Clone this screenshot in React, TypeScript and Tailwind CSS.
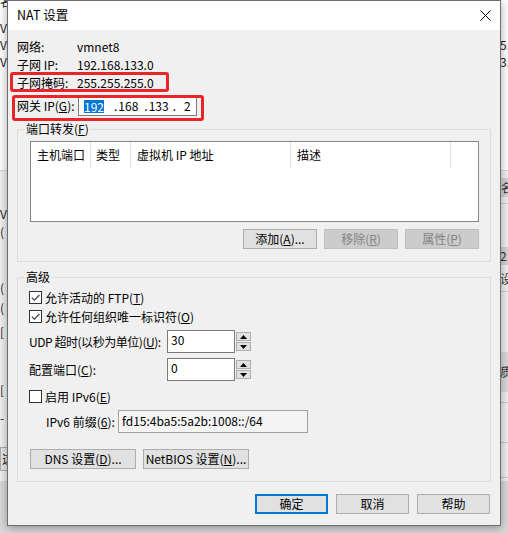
import React from "react";

const FONT = "font-['Noto_Sans_CJK_SC',sans-serif]";

function Checkbox({ checked }: { checked?: boolean }) {
  return (
    <span className="w-[13px] h-[13px] border border-[#333333] bg-white flex items-center justify-center shrink-0">
      {checked && (
        <svg width="11" height="11" viewBox="0 0 11 11">
          <path d="M1.8 5.6 L4.3 8.1 L9.4 3" fill="none" stroke="#3a3a3a" strokeWidth="1.1" />
        </svg>
      )}
    </span>
  );
}

function SpinBtn({ up }: { up?: boolean }) {
  return (
    <div className="w-[15px] h-[9px] border border-[#adadad] bg-[#e1e1e1] flex items-center justify-center">
      <svg width="7" height="4" viewBox="0 0 7 4">
        {up ? <path d="M0 4 L3.5 0 L7 4 Z" fill="#000" /> : <path d="M0 0 L3.5 4 L7 0 Z" fill="#000" />}
      </svg>
    </div>
  );
}

function Spin({ value }: { value: string }) {
  return (
    <div className="flex items-center shrink-0">
      <div className="w-[68px] h-[23px] border border-[#7a7a7a] bg-white pl-[3px] pt-[2px] text-[12px] leading-[14px]">
        {value}
      </div>
      <div className="ml-[1px] flex flex-col gap-[1px]">
        <SpinBtn up />
        <SpinBtn />
      </div>
    </div>
  );
}

function Btn({
  children,
  w,
  disabled,
  primary,
}: {
  children: React.ReactNode;
  w: string;
  disabled?: boolean;
  primary?: boolean;
}) {
  const base = "h-[20px] flex items-center justify-center text-[12px] leading-none whitespace-nowrap " + w;
  if (primary) return <div className={base + " border-2 border-[#0078d7] bg-[#e1e1e1] text-black"}>{children}</div>;
  if (disabled)
    return <div className={base + " border border-[#bfbfbf] bg-[#cccccc] text-[#838383]"}>{children}</div>;
  return <div className={base + " border border-[#adadad] bg-[#e1e1e1] text-black"}>{children}</div>;
}

function Background() {
  return (
    <div className="absolute inset-0 flex flex-col bg-[#f0f0f0] text-[12px] text-[#222222]">
      <div className="h-[171px] bg-white border-b border-[#d6d6d6] flex flex-col">
        <div className="flex justify-between h-[12px] leading-[12px]">
          <span className="-mt-[4px]">名称</span>
          <span />
        </div>
        <div className="flex justify-between mt-[7px] h-[17px] leading-[17px]">
          <span>VMnet0</span>
          <span />
        </div>
        <div className="flex justify-between h-[17px] leading-[17px]">
          <span>VMnet1</span>
          <span className="-mr-[2px]">5.</span>
        </div>
        <div className="flex justify-between h-[17px] leading-[17px]">
          <span>VMnet8</span>
          <span className="-mr-[2px]">3.</span>
        </div>
      </div>
      <div className="h-[310px] flex justify-between">
        <div className="w-[7px] flex flex-col leading-[14px]">
          <span className="mt-[36px]">V</span>
          <span className="mt-[4px]">(</span>
          <span className="mt-[42px]">(</span>
          <span className="mt-[6px]">(</span>
          <span className="mt-[10px]">[</span>
          <span className="mt-[44px]">[</span>
          <span className="mt-[14px]">-</span>
          <div className="mt-[22px] h-[24px] w-[30px] border border-[#adadad] bg-[#e9e9e9] flex items-center pl-[1px]">
            这
          </div>
        </div>
        <div className="w-[8px] flex flex-col text-[#333333]">
          <div className="mt-[7px] h-[19px] bg-[#d4d4d4] leading-[19px] pl-[1px] whitespace-nowrap">名</div>
          <div className="mt-[6px] h-[1px] bg-[#d0d0d0]" />
          <div className="mt-[43px] h-[18px] bg-[#d4d4d4] leading-[18px] whitespace-nowrap">2员</div>
          <div className="mt-[4px] h-[20px] leading-[20px] whitespace-nowrap">设</div>
          <div className="mt-[2px] h-[1px] bg-[#d0d0d0]" />
          <div className="mt-[60px] h-[40px] bg-[#dadada] leading-[40px] whitespace-nowrap">质</div>
          <div className="mt-[10px] h-[1px] bg-[#c8c8c8]" />
          <div className="mt-[39px] h-[1px] bg-[#c8c8c8]" />
          <div className="mt-[34px] h-[1px] bg-[#c8c8c8]" />
        </div>
      </div>
      <div className="flex-1 bg-[#d9d9d9]" />
    </div>
  );
}

export default function App() {
  return (
    <div className={"relative w-[508px] h-[533px] overflow-hidden text-black " + FONT}>
      <Background />
      <div className="absolute left-[7px] top-0 w-[494px] h-[526px] border border-[#6e6e6e] bg-[#f0f0f0] shadow-[0_2px_9px_rgba(0,0,0,0.35)] flex flex-col">
        {/* title bar */}
        <div className="h-[29px] bg-white flex items-center justify-between pl-[9px] pr-[9px] shrink-0">
          <span className="text-[12.5px] leading-none">NAT 设置</span>
          <svg width="11" height="11" viewBox="0 0 11 11">
            <path d="M0.5 0.5 L10.5 10.5 M10.5 0.5 L0.5 10.5" stroke="#000" strokeWidth="1" />
          </svg>
        </div>

        {/* body */}
        <div className="flex flex-col pl-[9px] pr-[9px] pt-[8px] text-[12px] whitespace-nowrap">
          <div className="flex items-center h-[18px] leading-none">
            <span className="w-[60px] shrink-0">网络:</span>
            <span>vmnet8</span>
          </div>
          <div className="flex items-center h-[18px] leading-none">
            <span className="w-[60px] shrink-0">子网 IP:</span>
            <span>192.168.133.0</span>
          </div>
          <div className="flex items-center h-[18px] leading-none">
            <span className="w-[60px] shrink-0">子网掩码:</span>
            <span>255.255.255.0</span>
          </div>
          <div className="flex items-center h-[20px] mt-[4px] leading-none">
            <span className="w-[61px] shrink-0">
              网关 IP(<u>G</u>):
            </span>
            <div className="w-[119px] h-[20px] border border-[#7a7a7a] bg-white flex items-center pl-[5px]">
              <span className="bg-[#0078d7] text-white leading-[13px]">192</span>
              <span className="ml-[10px]">.</span>
              <span className="ml-[1px]">168</span>
              <span className="ml-[6px]">.</span>
              <span className="ml-[1px]">133</span>
              <span className="ml-[4px]">.</span>
              <span className="ml-[8px]">2</span>
            </div>
          </div>

          {/* port forwarding group */}
          <fieldset className="mt-[5px] border border-[#dcdcdc] pb-[12px]">
            <legend className="ml-[6px] px-[2px] leading-[16px]">
              端口转发(<u>F</u>)
            </legend>
            <div className="mt-[4px] ml-[12px] mr-[11px] h-[81px] border border-[#828790] bg-white">
              <div className="flex h-[26px] leading-none">
                <div className="w-[60px] pl-[6px] border-r border-[#e5e5e5] flex items-center">主机端口</div>
                <div className="w-[40px] pl-[5px] border-r border-[#e5e5e5] flex items-center">类型</div>
                <div className="w-[160px] pl-[6px] border-r border-[#e5e5e5] flex items-center">虚拟机 IP 地址</div>
                <div className="w-[160px] pl-[6px] border-r border-[#e5e5e5] flex items-center">描述</div>
              </div>
            </div>
            <div className="mt-[7px] mr-[11px] flex justify-end gap-[7px]">
              <Btn w="w-[74px]">
                添加(<u>A</u>)...
              </Btn>
              <Btn w="w-[74px]" disabled>
                移除(<u>R</u>)
              </Btn>
              <Btn w="w-[74px]" disabled>
                属性(<u>P</u>)
              </Btn>
            </div>
          </fieldset>

          {/* advanced group */}
          <fieldset className="mt-[7px] border border-[#dcdcdc] pb-[12px]">
            <legend className="ml-[6px] px-[2px] leading-[16px]">高级</legend>
            <div className="mt-[3px] ml-[11px] h-[19px] flex items-center leading-none">
              <Checkbox checked />
              <span className="ml-[3px]">
                允许活动的 FTP(<u>T</u>)
              </span>
            </div>
            <div className="ml-[11px] h-[19px] flex items-center leading-none">
              <Checkbox checked />
              <span className="ml-[3px]">
                允许任何组织唯一标识符(<u>O</u>)
              </span>
            </div>
            <div className="mt-[4px] ml-[11px] h-[23px] flex items-center leading-none">
              <span className="w-[138px] shrink-0 tracking-[-0.45px]">
                UDP 超时(以秒为单位)(<u>U</u>):
              </span>
              <Spin value="30" />
            </div>
            <div className="mt-[5px] ml-[11px] h-[23px] flex items-center leading-none">
              <span className="w-[138px] shrink-0">
                配置端口(<u>C</u>):
              </span>
              <Spin value="0" />
            </div>
            <div className="mt-[6px] ml-[11px] h-[19px] flex items-center leading-none">
              <Checkbox />
              <span className="ml-[3px]">
                启用 IPv6(<u>E</u>)
              </span>
            </div>
            <div className="mt-[4px] ml-[28px] h-[23px] flex items-center leading-none">
              <span className="w-[72px] shrink-0">
                IPv6 前缀(<u>6</u>):
              </span>
              <div className="w-[190px] h-[23px] border border-[#a0a0a0] bg-[#f4f4f4] pl-[3px] pt-[3px] leading-[14px]">
                fd15:4ba5:5a2b:1008::/64
              </div>
            </div>
            <div className="mt-[16px] ml-[12px] flex gap-[7px]">
              <Btn w="w-[106px]">
                DNS 设置(<u>D</u>)...
              </Btn>
              <Btn w="w-[106px]">
                NetBIOS 设置(<u>N</u>)...
              </Btn>
            </div>
          </fieldset>

          <div className="mt-[12px] mr-[1px] flex justify-end gap-[8px]">
            <Btn w="w-[73px]" primary>
              确定
            </Btn>
            <Btn w="w-[73px]">取消</Btn>
            <Btn w="w-[73px]">帮助</Btn>
          </div>
        </div>

        {/* annotation boxes */}
        <div className="absolute left-[2px] top-[71px] w-[159px] h-[20px] border-[3px] border-[#e8262a] rounded-[3px]" />
        <div className="absolute left-[4px] top-[94px] w-[192px] h-[26px] border-[3px] border-[#e8262a] rounded-[3px]" />
      </div>
    </div>
  );
}
